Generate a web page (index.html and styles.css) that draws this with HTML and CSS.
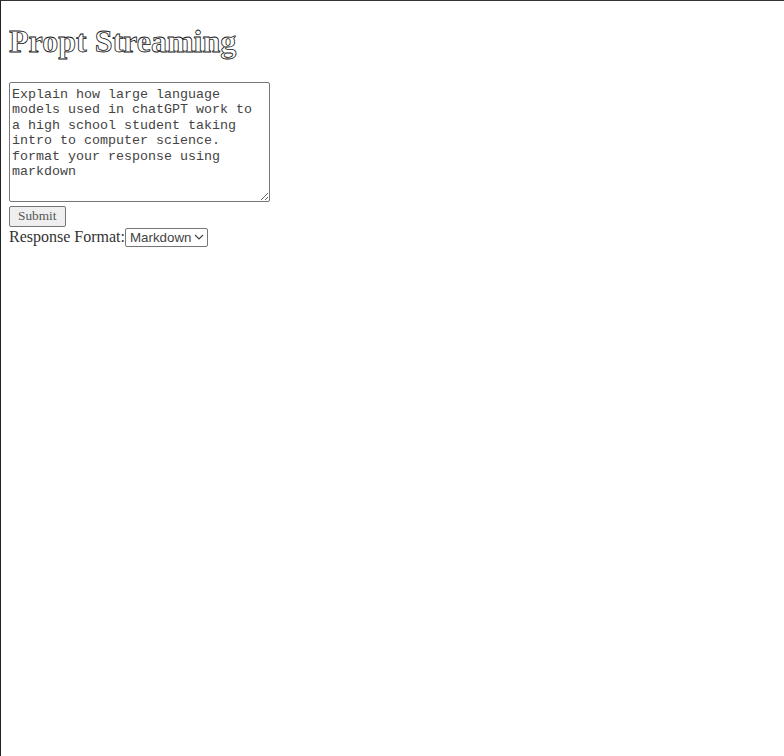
FILE: index.html
```html
<!DOCTYPE html>
<html>
<head>
<meta charset="utf-8">
<title>Propt Streaming</title>
<link rel="stylesheet" href="styles.css">
</head>
<body>
<h1 class="title">Propt Streaming</h1>
<form class="prompt-form">
<textarea class="prompt">Explain how large language models used in chatGPT work to a high school student taking intro to computer science. format your response using markdown</textarea><br>
<button type="button" class="submit">Submit</button>
</form>
<div class="format-row">Response Format:<select class="format"><option>Markdown</option><option>Plain text</option></select></div>
</body>
</html>
```
FILE: styles.css
```css
html {
  border-top: 1px solid #333;
  border-left: 1px solid #222;
  min-height: 100%;
  box-sizing: border-box;
  background: #fff;
}
body {
  margin: 8px;
  font-family: "Liberation Serif", "Times New Roman", serif;
  font-size: 16px;
  color: #333;
}
.title {
  font-size: 32px;
  font-weight: bold;
  color: #fff;
  -webkit-text-stroke: 0.8px #111;
  margin: 14.44px 0 21.44px;
}
.prompt-form {
  margin: 0;
}
.prompt {
  box-sizing: border-box;
  width: 261px;
  height: 120px;
  padding: 4px 2px 2px;
  border: 1px solid #767676;
  border-radius: 2px;
  font-family: "Liberation Mono", "Courier New", monospace;
  font-size: 13.333px;
  line-height: 15.5px;
  color: #444;
  resize: both;
  margin: 0;
}
.submit {
  font-family: "Liberation Serif", "Times New Roman", serif;
  font-size: 13.333px;
  color: #555;
  background: #efefef;
  border: 1px solid #767676;
  border-radius: 2px;
  padding: 1px 8px;
  height: 21px;
  margin: 0;
}
.format-row {
  line-height: 19px;
}
.format {
  -webkit-appearance: none;
  appearance: none;
  box-sizing: border-box;
  width: 83px;
  height: 19px;
  padding: 0 16px 0 4px;
  border: 1px solid #767676;
  border-radius: 2px;
  background: #fff url("data:image/svg+xml;utf8,<svg xmlns='http://www.w3.org/2000/svg' width='10' height='6' viewBox='0 0 10 6'><path d='M1 1 L5 5 L9 1' fill='none' stroke='%23444' stroke-width='1.2'/></svg>") no-repeat right 3px center;
  font-family: "Liberation Sans", Arial, sans-serif;
  font-size: 13.333px;
  color: #444;
  margin: 0;
  vertical-align: baseline;
}
```
